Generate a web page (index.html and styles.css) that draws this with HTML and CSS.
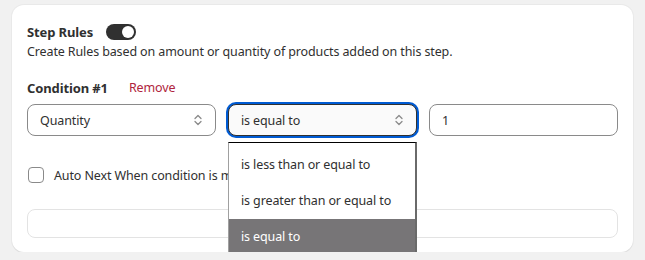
FILE: index.html
```html
<!DOCTYPE html>
<html lang="en">
  <head>
    <meta charset="UTF-8" />
    <meta name="viewport" content="width=device-width, initial-scale=1.0" />
    <title>Step Rules</title>
    <link rel="stylesheet" href="styles.css">
  </head>
  <body>
    <div class="card">
      <div class="titleRow">
        <span class="title">Step Rules</span>
        <span class="toggle"><span class="knob"></span></span>
      </div>
      <p class="desc">Create Rules based on amount or quantity of products added on this step.</p>

      <div class="conditionHead">
        <span class="condTitle">Condition #1</span>
        <span class="remove">Remove</span>
      </div>

      <div class="fields">
        <div class="select">
          <span>Quantity</span>
          <svg class="chev" width="10" height="14" viewBox="0 0 10 14"><path d="M2 5.5 5 2.5 8 5.5M2 8.5 5 11.5 8 8.5" fill="none" stroke="#8a8a8a" stroke-width="1.3" stroke-linecap="round" stroke-linejoin="round"/></svg>
        </div>
        <div class="selectWrap">
          <div class="select focused">
            <span>is equal to</span>
            <svg class="chev" width="10" height="14" viewBox="0 0 10 14"><path d="M2 5.5 5 2.5 8 5.5M2 8.5 5 11.5 8 8.5" fill="none" stroke="#8a8a8a" stroke-width="1.3" stroke-linecap="round" stroke-linejoin="round"/></svg>
          </div>
          <ul class="menu">
            <li>is less than or equal to</li>
            <li>is greater than or equal to</li>
            <li class="active">is equal to</li>
          </ul>
        </div>
        <div class="input">1</div>
      </div>

      <label class="check">
        <span class="box"></span>
        <span>Auto Next When condition is met</span>
      </label>

      <div class="emptyBox"></div>
    </div>
  </body>
</html>
```

FILE: styles.css
```css
body {
  margin: 0;
  background: #f1f1f1;
  font-family: "Noto Sans", Arial, sans-serif;
  font-size: 12.5px;
  letter-spacing: -0.12px;
  color: #303030;
}

.card {
  margin: 5px 12px 0 12px;
  height: 247px;
  box-sizing: border-box;
  background: #fff;
  border-radius: 12px;
  box-shadow: 0 1px 0 #dcdcdc, 0 0 0 1px #e9e9e9;
  padding: 17px 15px 0 15px;
  overflow: hidden;
}

.titleRow {
  display: flex;
  align-items: center;
  gap: 13px;
  height: 20px;
}

.title,
.condTitle {
  font-weight: 700;
  font-size: 13px;
}

.toggle {
  width: 30px;
  height: 16px;
  border-radius: 8px;
  background: #303030;
  display: flex;
  align-items: center;
  justify-content: flex-end;
  padding: 0 2px;
  box-sizing: border-box;
}

.knob {
  width: 12px;
  height: 12px;
  border-radius: 50%;
  background: #fff;
}

.desc {
  margin: 0;
  line-height: 20px;
}

.conditionHead {
  display: flex;
  align-items: center;
  gap: 21px;
  line-height: 20px;
  margin-top: 16px;
}

.remove {
  color: #b0243d;
}

.fields {
  display: grid;
  grid-template-columns: 1fr 1fr 1fr;
  gap: 12px;
  margin-top: 6px;
}

.select,
.input {
  height: 32px;
  box-sizing: border-box;
  border: 1px solid #8a8a8a;
  border-radius: 8px;
  padding: 0 12px;
  display: flex;
  align-items: center;
  justify-content: space-between;
}

.select.focused {
  border-color: #303030;
  box-shadow: 0 0 0 2px #005bd3;
  background: #fafafa;
}

.selectWrap {
  position: relative;
}

.menu {
  position: absolute;
  top: 38px;
  left: 0;
  right: 0;
  margin: 0;
  padding: 4px 0 0 0;
  list-style: none;
  background: #fff;
  border-top: 1px solid #000;
  border-left: 1px solid #a0a0a0;
  border-right: 2px solid #6a6a6a;
  z-index: 2;
}

.menu li {
  height: 36px;
  line-height: 36px;
  padding-left: 12px;
}

.menu li.active {
  background: #777577;
  color: #fff;
}

.check {
  display: flex;
  align-items: center;
  gap: 10px;
  margin-top: 29px;
  height: 20px;
}

.box {
  width: 16px;
  height: 16px;
  box-sizing: border-box;
  border: 1px solid #8a8a8a;
  border-radius: 4px;
  margin-left: 1px;
}

.emptyBox {
  margin-top: 24px;
  height: 27px;
  border: 1px solid #e3e3e3;
  border-radius: 8px;
}
```
